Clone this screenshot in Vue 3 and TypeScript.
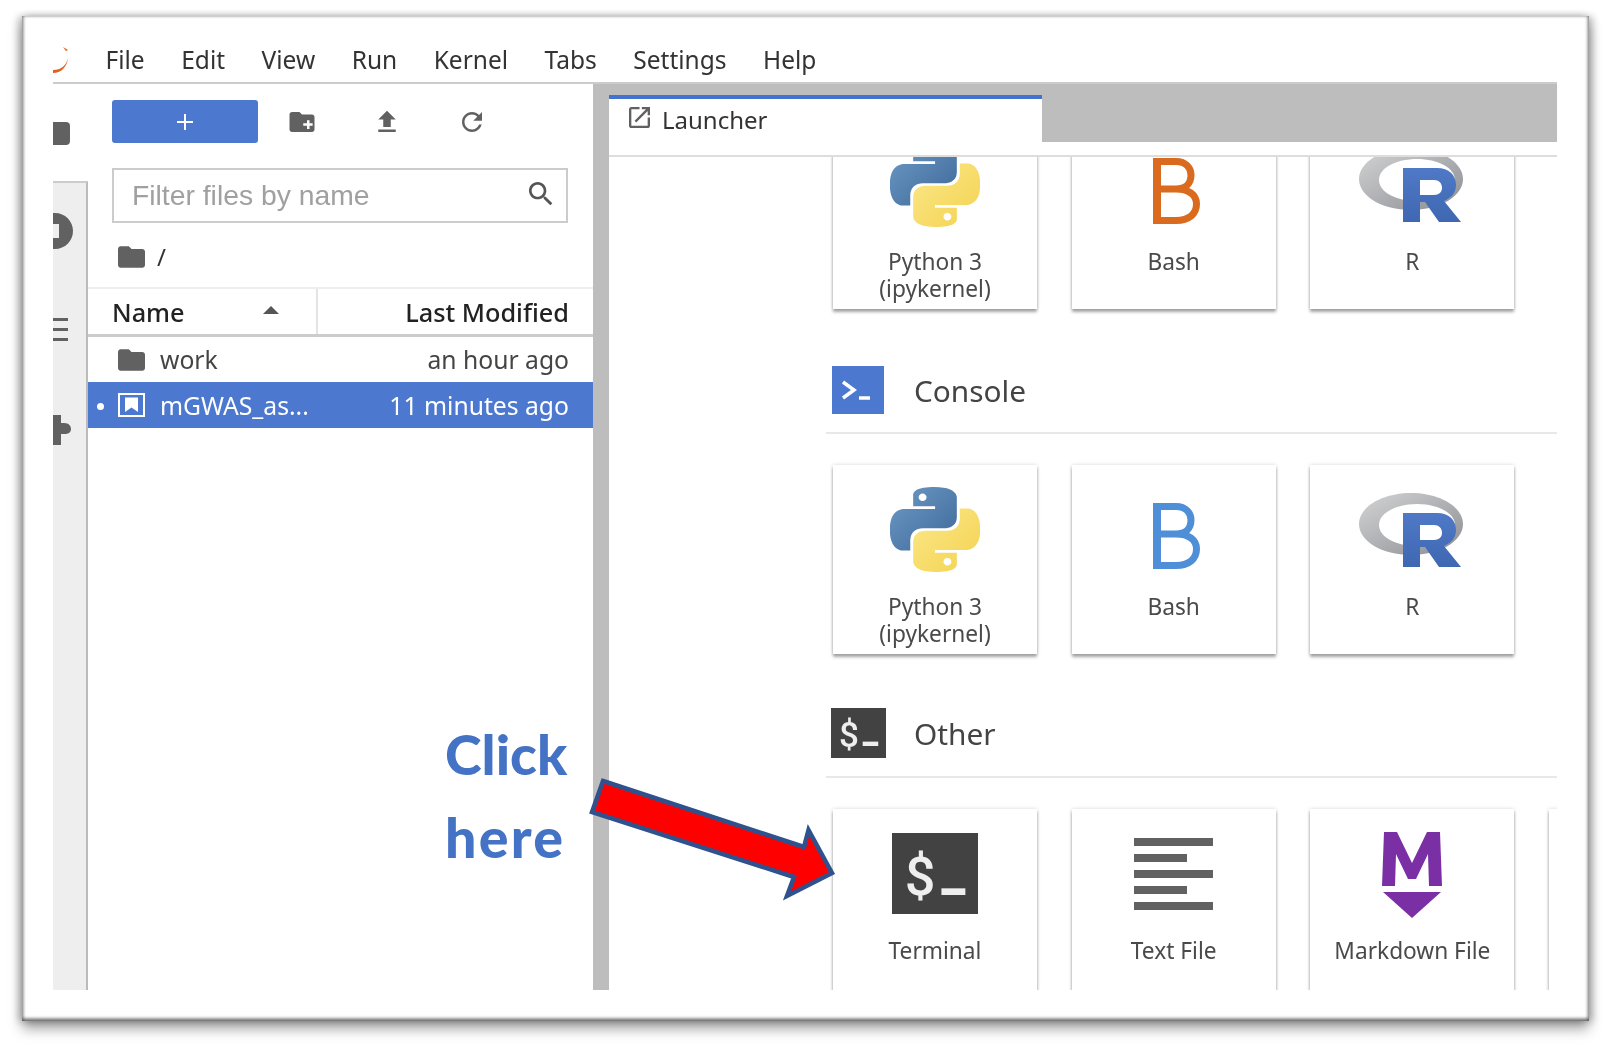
<script setup lang="ts">
type Kind = 'python' | 'bashO' | 'bashB' | 'r' | 'terminal' | 'text' | 'md' | 'none'
interface Card { kind: Kind; label: string[] }
interface Section { title: string; icon: 'console' | 'other' | ''; cards: Card[] }

const menus: string[] = ['File', 'Edit', 'View', 'Run', 'Kernel', 'Tabs', 'Settings', 'Help']

const sections: Section[] = [
  { title: '', icon: '', cards: [
    { kind: 'python', label: ['Python 3', '(ipykernel)'] },
    { kind: 'bashO', label: ['Bash'] },
    { kind: 'r', label: ['R'] },
  ] },
  { title: 'Console', icon: 'console', cards: [
    { kind: 'python', label: ['Python 3', '(ipykernel)'] },
    { kind: 'bashB', label: ['Bash'] },
    { kind: 'r', label: ['R'] },
  ] },
  { title: 'Other', icon: 'other', cards: [
    { kind: 'terminal', label: ['Terminal'] },
    { kind: 'text', label: ['Text File'] },
    { kind: 'md', label: ['Markdown File'] },
    { kind: 'none', label: [] },
  ] },
]

const textBars: string[] = ['long', 'short', 'long', 'short', 'long']
const folderPath = 'M10 4H4c-1.1 0-1.99.9-1.99 2L2 18c0 1.1.9 2 2 2h16c1.1 0 2-.9 2-2V8c0-1.1-.9-2-2-2h-8l-2-2z'
</script>

<template>
  <div class="page">
    <div class="frame">
      <div class="app">
        <header class="menubar">
          <svg class="logo" viewBox="0 0 17 28"><path d="M0 25C8 25 13 21 15 13C14 22 8 28 0 28Z M10 2L15 5L13 6Z" fill="#e0601c" /></svg>
          <span v-for="m in menus" :key="m" class="menu">{{ m }}</span>
        </header>
        <div class="body">
          <aside class="strip">
            <div class="strip-top"><svg class="side-folder" viewBox="0 0 17 23"><path d="M0 0H13C15.500 0 17 1.500 17 4V19C17 21.500 15.500 23 13 23H0Z" fill="#616161" /></svg></div>
            <div class="strip-rest">
              <svg class="side-run" viewBox="0 0 20 36"><path fill-rule="evenodd" d="M2 0C12 0 20 8 20 18S12 36 2 36H0V25H6V11H0V0Z" fill="#616161" /></svg>
              <div class="side-list"><i></i><i></i><i></i></div>
              <svg class="side-ext" viewBox="0 0 18 30"><path d="M0 0H8V8H11C16 8 18 11 18 14S16 19 11 19H8V30H0Z" fill="#616161" /></svg>
            </div>
          </aside>

          <section class="browser">
            <div class="toolbar">
              <button class="new-btn"><svg viewBox="0 0 20 20"><path d="M10 2V18M2 10H18" stroke="#fff" stroke-width="2" /></svg></button>
              <span class="tool"><svg viewBox="0 0 24 24" class="ic30"><path :d="folderPath" fill="#616161" /><path d="M13 13H16V10.500H18V13H20.500V15H18V17.500H16V15H13Z" fill="#fff" /></svg></span>
              <span class="tool"><svg viewBox="0 0 24 24" class="ic30"><path d="M9 16h6v-6h4l-7-7-7 7h4zm-4 2h14v2H5z" fill="#616161" /></svg></span>
              <span class="tool"><svg viewBox="0 0 24 24" class="ic30"><path d="M17.650 6.350C16.200 4.900 14.210 4 12 4c-4.420 0-7.990 3.580-7.990 8s3.570 8 7.990 8c3.730 0 6.840-2.550 7.730-6h-2.080c-.82 2.330-3.040 4-5.650 4-3.310 0-6-2.690-6-6s2.690-6 6-6c1.660 0 3.140.69 4.220 1.780L13 11h7V4l-2.350 2.350z" fill="#616161" /></svg></span>
            </div>
            <div class="filter">
              <span class="placeholder">Filter files by name</span>
              <svg viewBox="0 0 24 24" class="search"><path d="M15.500 14h-.79l-.28-.27C15.410 12.590 16 11.110 16 9.500 16 5.910 13.090 3 9.500 3S3 5.910 3 9.500 5.910 16 9.500 16c1.610 0 3.090-.59 4.230-1.570l.27.28v.79l5 4.990L20.490 19l-4.990-5zm-6 0C7.010 14 5 11.990 5 9.500S7.010 5 9.500 5 14 7.010 14 9.500 11.990 14 9.500 14z" fill="#555" /></svg>
            </div>
            <div class="crumbs">
              <svg viewBox="2 4 20 16" class="folder"><path :d="folderPath" fill="#616161" /></svg>
              <span class="slash">/</span>
            </div>
            <div class="thead">
              <div class="th-name"><span>Name</span><i class="caret"></i></div>
              <div class="th-mod">Last Modified</div>
            </div>
            <div class="row">
              <svg viewBox="2 4 20 16" class="folder"><path :d="folderPath" fill="#616161" /></svg>
              <span class="fname">work</span><span class="fdate">an hour ago</span>
            </div>
            <div class="row selected">
              <i class="dot"></i>
              <svg viewBox="0 0 27 24" class="nb"><path fill-rule="evenodd" d="M0 0H27V24H0ZM2 2V22H25V2Z" fill="#fff" /><path d="M7 4.500H20V19L13.500 14.500L7 19Z" fill="#fff" /></svg>
              <span class="fname">mGWAS_as...</span><span class="fdate">11 minutes ago</span>
            </div>
          </section>

          <div class="splitter"></div>

          <main class="main">
            <div class="tabbar">
              <div class="tab">
                <svg viewBox="3 3 18 18" class="launch"><path d="M19 19H5V5h7V3H5c-1.110 0-2 .9-2 2v14c0 1.100.89 2 2 2h14c1.100 0 2-.9 2-2v-7h-2v7zM14 3v2h3.590l-9.830 9.830 1.410 1.410L19 6.410V10h2V3h-7z" fill="#616161" /></svg>
                <span>Launcher</span>
              </div>
            </div>
            <div class="scroller">
              <div class="launcher">
                <div v-for="(s, i) in sections" :key="i" class="section">
                  <div v-if="s.title" class="sec-head" :class="s.icon">
                    <span class="sec-slot">
                      <span v-if="s.icon === 'console'" class="sec-console">
                        <svg viewBox="0 0 52 48"><path d="M11 16L22 24L11 32" fill="none" stroke="#fff" stroke-width="3.500" /><path d="M27 32H38" stroke="#fff" stroke-width="3.500" /></svg>
                      </span>
                      <span v-else class="sec-other term-small"><span class="term-text"><span>$</span><span class="us">_</span></span></span>
                    </span>
                    <span class="sec-title">{{ s.title }}</span>
                  </div>
                  <div class="cards">
                    <div v-for="(c, j) in s.cards" :key="j" class="card">
                      <div class="card-icon">
                        <svg v-if="c.kind === 'python'" viewBox="0 0 24 24" preserveAspectRatio="none" class="py">
                          <defs>
                            <linearGradient :id="'pb' + i" x1="0" y1="0" x2="1" y2="1"><stop offset="0" stop-color="#6f9bc8" /><stop offset="1" stop-color="#3c6797" /></linearGradient>
                            <linearGradient :id="'py' + i" x1="0" y1="0" x2="1" y2="1"><stop offset="0" stop-color="#fbe88b" /><stop offset="1" stop-color="#f4d24f" /></linearGradient>
                          </defs>
                          <path :fill="'url(#pb' + i + ')'" d="M14.250.18l.9.2.73.26.59.3.45.32.34.34.25.34.16.33.1.3.04.26.02.2-.01.13V8.500l-.05.63-.13.55-.21.46-.26.38-.3.31-.33.25-.35.19-.35.14-.33.1-.3.07-.26.04-.21.02H8.770l-.69.05-.59.14-.5.22-.41.27-.33.32-.27.35-.2.36-.15.37-.1.35-.07.32-.04.27-.02.21v3.060H3.170l-.21-.03-.28-.07-.32-.12-.35-.18-.36-.26-.36-.36-.35-.46-.32-.59-.28-.73-.21-.88-.14-1.050-.05-1.230.06-1.220.16-1.040.24-.87.32-.71.36-.57.4-.44.42-.33.42-.24.4-.16.36-.1.32-.05.24-.01h.16l.06.01h8.160v-.83H6.180l-.01-2.750-.02-.37.05-.34.11-.31.17-.28.25-.26.31-.23.38-.2.44-.18.51-.15.58-.12.64-.1.71-.06.77-.04.84-.02 1.270.05zm-6.300 1.980l-.23.33-.08.41.08.41.23.34.33.22.41.09.41-.09.33-.22.23-.34.08-.41-.08-.41-.23-.33-.33-.22-.41-.09-.41.09z" />
                          <path :fill="'url(#py' + i + ')'" d="M21.040 6.110l.28.06.32.12.35.18.36.27.36.35.35.47.32.59.28.73.21.88.14 1.040.05 1.230-.06 1.230-.16 1.040-.24.86-.32.71-.36.57-.4.45-.42.33-.42.24-.4.16-.36.09-.32.05-.24.02-.16-.01h-8.220v.82h5.840l.01 2.760.02.36-.05.34-.11.31-.17.29-.25.25-.31.24-.38.2-.44.17-.51.15-.58.13-.64.09-.71.07-.77.04-.84.01-1.270-.04-1.070-.14-.9-.2-.73-.25-.59-.3-.45-.33-.34-.34-.25-.34-.16-.33-.1-.3-.04-.25-.02-.2.01-.13v-5.340l.05-.64.13-.54.21-.46.26-.38.3-.32.33-.24.35-.2.35-.14.33-.1.3-.06.26-.04.21-.02.13-.01h5.840l.69-.05.59-.14.5-.21.41-.28.33-.32.27-.35.2-.36.15-.36.1-.35.07-.32.04-.28.02-.21V6.070h2.090l.14.01zm-6.470 14.250l-.23.33-.08.41.08.41.23.33.33.23.41.08.41-.08.33-.23.23-.33.08-.41-.08-.41-.23-.33-.33-.23-.41-.08-.41.08z" />
                        </svg>
                        <svg v-else-if="c.kind === 'bashO' || c.kind === 'bashB'" viewBox="0 0 49 68" class="bash" :class="c.kind">
                          <path d="M5 4.500H24C34 4.500 39 11 39 18C39 26 34 32 24 32H5M24 32C37 32 44.500 38 44.500 47C44.500 57 37 63.500 24 63.500H5V4.500" fill="none" stroke="currentColor" stroke-width="7" />
                          <path d="M5 1V67" stroke="currentColor" stroke-width="8" />
                        </svg>
                        <svg v-else-if="c.kind === 'r'" viewBox="0 0 107 75" class="rlogo">
                          <defs>
                            <linearGradient :id="'rg' + i" x1="0" y1="0" x2="1" y2="1"><stop offset="0" stop-color="#d4d4d6" /><stop offset="1" stop-color="#8b8d92" /></linearGradient>
                            <linearGradient :id="'rb' + i" x1="0" y1="0" x2="0" y2="1"><stop offset="0" stop-color="#4f79c6" /><stop offset="1" stop-color="#3f67b2" /></linearGradient>
                          </defs>
                          <path fill-rule="evenodd" :fill="'url(#rg' + i + ')'" d="M52 0C81 0 104 14 104 31C104 48 81 62 52 62C23 62 0 48 0 31C0 14 23 0 52 0ZM58 11C37 11 20 20 20 32C20 44 37 53 58 53C79 53 96 44 96 32C96 20 79 11 58 11Z" />
                          <path fill-rule="evenodd" :fill="'url(#rb' + i + ')'" d="M44 20H78C90 20 97 27 97 37C97 45 92 50 85 53L102 74H80L66 54H61V74H44ZM61 32V47H75C80 47 83 44 83 40C83 35 80 32 75 32Z" />
                        </svg>
                        <span v-else-if="c.kind === 'terminal'" class="term-big"><span class="term-text"><span>$</span><span class="us">_</span></span></span>
                        <div v-else-if="c.kind === 'text'" class="textfile">
                          <i v-for="(b, k) in textBars" :key="k" :class="b"></i>
                        </div>
                        <svg v-else-if="c.kind === 'md'" viewBox="0 0 60 86" class="md">
                          <path d="M2 0H15L30 31L45 0H58L60 54H47L46 22L34 47H26L14 22L13 54H0Z" fill="#7b2fa5" /><path d="M1 60H59L30 86Z" fill="#7b2fa5" />
                        </svg>
                      </div>
                      <div class="card-label"><div v-for="l in c.label" :key="l">{{ l }}</div></div>
                    </div>
                  </div>
                </div>
              </div>
            </div>
          </main>
        </div>
      </div>
    </div>

    <div class="note"><div>Click</div><div class="here">here</div></div>
    <svg class="arrow" viewBox="0 0 260 135" width="260" height="135">
      <polygon points="15,6 216,72 220.500,55 244,98 199,121 206,102 4,37" fill="#ff0000" stroke="#2f528f" stroke-width="4.500" />
    </svg>
  </div>
</template>

<style>
html, body { margin: 0; background: #fff; }
</style>

<style scoped>
.page { position: relative; box-sizing: border-box; width: 1611px; height: 1050px; padding: 16px 22px 29px 22px; background: #fff; overflow: hidden; font-family: "Noto Sans", "Open Sans", sans-serif; color: #333; }
.frame { box-sizing: border-box; height: 100%; padding: 0 32px 31px 31px; background: #fff; box-shadow: inset 2px 0 3px rgba(0,0,0,.28), inset -2px 0 3px rgba(0,0,0,.28), inset 0 -3px 3px rgba(0,0,0,.42), 0 8px 12px rgba(0,0,0,.35), -4px 0 7px rgba(0,0,0,.2), 4px 0 7px rgba(0,0,0,.2); }
.app { height: 100%; display: flex; flex-direction: column; overflow: hidden; filter: blur(.45px); }
.menubar { flex: none; box-sizing: border-box; height: 68px; padding-top: 22px; display: flex; align-items: center; gap: 36.500px; border-bottom: 2px solid #ccc; font-size: 24.500px; color: #333; }
.menu { line-height: 36px; }
.logo { width: 17px; height: 28px; margin-top: -2px; margin-right: -1px; flex: none; }
.body { flex: 1; min-height: 0; display: flex; }

.strip { flex: none; width: 35px; display: flex; flex-direction: column; overflow: hidden; }
.strip-top { height: 97px; flex: none; padding-top: 38px; box-sizing: border-box; }
.side-folder { display: block; width: 17px; height: 23px; }
.strip-rest { flex: 1; background: #eee; border-top: 2px solid #ccc; border-right: 2px solid #bbb; padding-top: 30px; }
.side-run { display: block; width: 20px; height: 36px; }
.side-list { margin-top: 69px; width: 15px; display: flex; flex-direction: column; gap: 7px; }
.side-list i { display: block; height: 3px; background: #616161; }
.side-ext { display: block; width: 18px; height: 30px; margin-top: 74px; }

.browser { flex: none; width: 505px; background: #fff; display: flex; flex-direction: column; }
.toolbar { display: flex; padding: 16px 0 0 24px; }
.new-btn { width: 146px; height: 43px; margin-right: 1px; border: 0; border-radius: 3px; background: #4d78d0; padding: 0; display: flex; align-items: center; justify-content: center; }
.new-btn svg { width: 20px; height: 20px; }
.tool { width: 85px; height: 43px; display: flex; align-items: center; justify-content: center; }
.ic30 { width: 30px; height: 30px; }
.filter { margin: 25px 0 0 24px; width: 456px; height: 55px; box-sizing: border-box; border: 2px solid #ccc; display: flex; align-items: center; justify-content: space-between; padding: 0 9px 0 18px; }
.placeholder { font-family: "Liberation Sans", sans-serif; font-size: 28.300px; color: #a0a0a0; }
.search { width: 32px; height: 32px; margin-top: -4px; }
.crumbs { height: 64px; flex: none; display: flex; align-items: center; padding: 3px 0 0 30px; box-sizing: border-box; gap: 12px; }
.folder { width: 27px; height: 22px; flex: none; }
.slash { font-size: 24px; }
.thead { flex: none; height: 50px; box-sizing: border-box; display: flex; border-top: 2px solid #eee; border-bottom: 3px solid #ccc; font-size: 25.300px; font-weight: 500; color: #222; }
.th-name { width: 230px; flex: none; box-sizing: border-box; padding: 1px 37px 0 24px; display: flex; align-items: center; justify-content: space-between; border-right: 2px solid #e4e4e4; }
.caret { width: 0; height: 0; border: 8px solid transparent; border-top: 0; border-bottom: 8px solid #555; margin-top: -4px; }
.th-mod { flex: 1; padding: 1px 24px 0 0; text-align: right; line-height: 44px; }
.row { height: 45px; flex: none; box-sizing: border-box; padding: 0 24px 0 30px; display: flex; align-items: center; font-size: 24.700px; color: #444; position: relative; }
.fname { margin-left: 15px; }
.fdate { margin-left: auto; }
.selected { background: #4d78d0; color: #fff; height: 46px; }
.dot { position: absolute; left: 9px; top: 21px; width: 7px; height: 7px; border-radius: 50%; background: #fff; }
.nb { width: 27px; height: 24px; flex: none; }

.splitter { flex: none; width: 16px; background: #bdbdbd; }
.main { flex: 1; min-width: 0; display: flex; flex-direction: column; }
.tabbar { flex: none; height: 73px; box-sizing: border-box; border-bottom: 2px solid #ddd; background: linear-gradient(#bdbdbd 58px, #fff 58px); padding-top: 11px; }
.tab { box-sizing: border-box; width: 433px; height: 60px; border-top: 4px solid #4472d0; background: #fff; display: flex; align-items: center; padding: 0 0 16px 20px; gap: 12px; font-size: 24px; color: #333; }
.launch { width: 21px; height: 21px; margin-top: -3px; }
.scroller { flex: 1; min-height: 0; overflow: hidden; }
.launcher { margin-top: -37px; margin-left: 217px; }
.sec-head { padding: 0 0 18px 6px; border-bottom: 2px solid #e8e8e8; margin-bottom: 31px; display: flex; align-items: center; }
.sec-head.console { margin-top: 57px; }
.sec-head.other { margin-top: 54px; }
.sec-slot { width: 82px; flex: none; display: flex; }
.sec-console { width: 52px; height: 48px; background: #4d78d0; display: block; }
.sec-console svg { display: block; width: 52px; height: 48px; }
.sec-other { width: 55px; height: 50px; margin-left: -1px; background: #424242; color: #eee; display: flex; align-items: center; justify-content: center; }
.term-small { font-size: 35px; }
.term-text { font-family: Roboto, "Noto Sans", sans-serif; font-weight: 500; line-height: 1; letter-spacing: .11em; white-space: nowrap; }
.us { font-weight: 900; vertical-align: .13em; letter-spacing: 0; }
.sec-title { font-size: 29.800px; color: #444; }
.cards { display: flex; gap: 34.700px; padding-left: 7px; }
.card { flex: none; width: 204px; height: 189px; box-sizing: border-box; background: #fff; box-shadow: 0 3px 3px rgba(0,0,0,.34), 0 0 4px rgba(0,0,0,.16); }
.card-icon { height: 129px; display: flex; align-items: center; justify-content: center; }
.card-label { font-size: 22.700px; line-height: 26.500px; text-align: center; color: #4a4a4a; }
.py { width: 90px; height: 85px; }
.bash { width: 49px; height: 68px; margin: 12px 0 0 5px; }
.bashO { color: #d96a1e; }
.bashB { color: #4e8fd8; }
.rlogo { width: 107px; height: 75px; margin-top: 2px; }
.term-big { width: 86px; height: 81px; background: #424242; color: #eee; display: flex; align-items: center; justify-content: center; font-size: 54px; }
.textfile { width: 79px; display: flex; flex-direction: column; gap: 8px; }
.textfile i { display: block; height: 8px; background: #616161; }
.textfile .short { width: 53px; }
.md { width: 60px; height: 86px; margin: 2px 1px 0 0; }

.note { position: absolute; left: 445px; top: 712px; font-family: Lato, "Noto Sans", sans-serif; font-weight: 900; font-size: 55.500px; line-height: 83px; color: #4472c4; }
.here { letter-spacing: 2.300px; }
.arrow { position: absolute; left: 588px; top: 775px; }
</style>
